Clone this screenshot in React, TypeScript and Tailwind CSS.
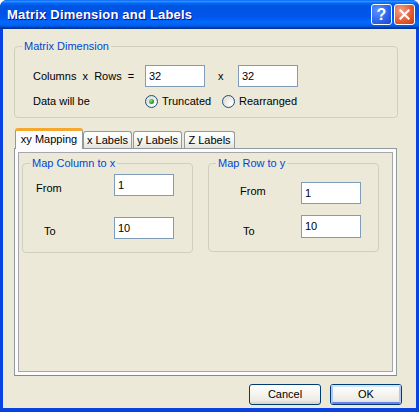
import React from "react";

/** XP 风格输入框 */
function Field(props: { value: string; w?: number; h?: number }) {
  return (
    <div
      className="flex items-center border border-[#7f9db9] bg-white pl-[3px] text-[11px] text-black"
      style={{ width: props.w ?? 60, height: props.h ?? 22 }}
    >
      {props.value}
    </div>
  );
}

function Radio(props: { checked?: boolean; label: string }) {
  return (
    <div className="flex items-center">
      <span className="flex h-[13px] w-[13px] items-center justify-center rounded-full border border-[#1c5180] bg-[radial-gradient(circle_at_70%_70%,#ffffff_0%,#e6e5dd_60%,#dcdad0_100%)]">
        {props.checked && (
          <span className="h-[5px] w-[5px] rounded-full bg-[radial-gradient(circle_at_35%_35%,#8ce28c,#21a121_60%,#1a8a1a)]" />
        )}
      </span>
      <span className="ml-[4px]">{props.label}</span>
    </div>
  );
}

function Group(props: {
  title: string;
  className: string;
  legendLeft?: number;
  children: React.ReactNode;
}) {
  return (
    <div className={"relative rounded-[4px] border border-[#d0d0bf] " + props.className}>
      <span
        className="absolute top-[-8px] bg-[#ece9d8] px-[2px] leading-[14px] text-[#0046d5]"
        style={{ left: props.legendLeft ?? 7 }}
      >
        {props.title}
      </span>
      {props.children}
    </div>
  );
}

function Tab(props: { label: string; w: number; active?: boolean; className?: string }) {
  if (props.active)
    return (
      <div
        className="relative z-10 -mb-px flex h-[21px] items-center justify-center rounded-t-[3px] border-x border-t-[3px] border-x-[#919b9c] border-t-[#f5a82c] bg-[#fcfcfe] pb-[2px]"
        style={{ width: props.w }}
      >
        {props.label}
      </div>
    );
  return (
    <div
      className={
        "flex h-[17px] items-center justify-center rounded-t-[3px] border-x border-t border-[#919b9c] bg-[linear-gradient(#ffffff,#f3f3ef_60%,#e4e3dc)] pt-px " +
        (props.className ?? "")
      }
      style={{ width: props.w }}
    >
      {props.label}
    </div>
  );
}

function XpButton(props: { label: string; focused?: boolean }) {
  return (
    <div className="flex h-[21px] w-[72px] rounded-[3px] border border-[#003c74] bg-[linear-gradient(#ffffff,#f4f3ee_50%,#ecebe6_80%,#d6d0c5)]">
      <div
        className={
          "flex flex-1 items-center justify-center rounded-[2px] " +
          (props.focused ? "border-2 border-[#b0c8f4] border-t-[#cee7ff] border-b-[#6982ee]" : "")
        }
      >
        {props.label}
      </div>
    </div>
  );
}

export default function App() {
  return (
    <div
      className="flex h-[412px] w-[419px] flex-col overflow-hidden rounded-t-[7px] bg-[#0842e0] text-[11px] text-black"
      style={{ fontFamily: '"Liberation Sans", Arial, sans-serif' }}
    >
      {/* 标题栏 */}
      <div className="flex h-[29px] shrink-0 items-center bg-[linear-gradient(#0058ee_0%,#3593ff_4%,#288eff_6%,#127dff_8%,#036ffc_10%,#0262ee_14%,#0057e5_20%,#0054e3_24%,#0055eb_56%,#005bf5_66%,#026afe_76%,#0062ef_86%,#0052d6_92%,#0040ab_94%,#003092_100%)] pl-[7px] pr-[4px]">
        <span className="flex-1 text-[13px] font-bold tracking-[0.2px] text-white [text-shadow:1px_1px_#0f1089]">
          Matrix Dimension and Labels
        </span>
        <div className="flex gap-[2px]">
          <div className="flex h-[21px] w-[21px] items-center justify-center rounded-[3px] border border-white bg-[radial-gradient(circle_at_30%_30%,#5b93ff,#2a63e9_60%,#1847c5)] text-[16px] font-bold text-white">
            ?
          </div>
          <div className="flex h-[21px] w-[21px] items-center justify-center rounded-[3px] border border-white bg-[radial-gradient(circle_at_30%_30%,#f0a08c,#e2582f_60%,#c0391a)]">
            <svg width="11" height="11" viewBox="0 0 11 11">
              <path d="M1.5 1.5 L9.5 9.5 M9.5 1.5 L1.5 9.5" stroke="white" strokeWidth="2.2" strokeLinecap="square" />
            </svg>
          </div>
        </div>
      </div>

      {/* 窗体 */}
      <div className="mx-[3px] mb-[4px] flex flex-1 flex-col bg-[#ece9d8]">
        <Group title="Matrix Dimension" className="ml-[11px] mt-[17px] h-[72px] w-[384px]" legendLeft={7}>
          <div className="flex pl-[18px] pt-[18px]">
            <div className="flex h-[22px] items-center">
              <span className="w-[112px] whitespace-pre">Columns  x  Rows  =</span>
              <Field value="32" />
              <span className="w-[33px] pl-[13px]">x</span>
              <Field value="32" />
            </div>
          </div>
          <div className="mt-[6px] flex items-center pl-[18px]">
            <span className="w-[112px]">Data will be</span>
            <div className="w-[77px]">
              <Radio checked label="Truncated" />
            </div>
            <Radio label="Rearranged" />
          </div>
        </Group>

        {/* 选项卡 */}
        <div className="ml-[12px] mt-[10px] flex items-end">
          <Tab label="xy Mapping" w={68} active />
          <Tab label="x Labels" w={49} />
          <Tab label="y Labels" w={49} className="ml-px" />
          <Tab label="Z Labels" w={51} className="ml-[2px]" />
        </div>
        <div className="ml-[11px] h-[228px] w-[383px] border border-[#919b9c] border-b-[#7f8a8b] bg-[#fcfcfe] p-[3px]">
          <div className="flex h-full items-start border border-[#a7a6aa] bg-[#ece9d8] pl-[3px] pt-[10px]">
            <Group title="Map Column to x" className="h-[90px] w-[171px]" legendLeft={7}>
              <div className="mt-[10px] flex h-[22px] items-center">
                <span className="mt-[6px] w-[91px] pl-[13px]">From</span>
                <Field value="1" />
              </div>
              <div className="mt-[21px] flex h-[22px] items-center">
                <span className="mt-[6px] w-[91px] pl-[21px]">To</span>
                <Field value="10" />
              </div>
            </Group>
            <Group title="Map Row to y" className="ml-[15px] h-[89px] w-[171px]" legendLeft={7}>
              <div className="mt-[18px] flex h-[22px] items-center">
                <span className="mb-[3px] w-[92px] pl-[31px]">From</span>
                <Field value="1" />
              </div>
              <div className="mt-[11px] flex h-[23px] items-center">
                <span className="mt-[10px] w-[92px] pl-[34px]">To</span>
                <Field value="10" h={23} />
              </div>
            </Group>
          </div>
        </div>

        <div className="mr-[14px] mt-[8px] flex justify-end gap-[9px]">
          <XpButton label="Cancel" />
          <XpButton label="OK" focused />
        </div>
      </div>
    </div>
  );
}
